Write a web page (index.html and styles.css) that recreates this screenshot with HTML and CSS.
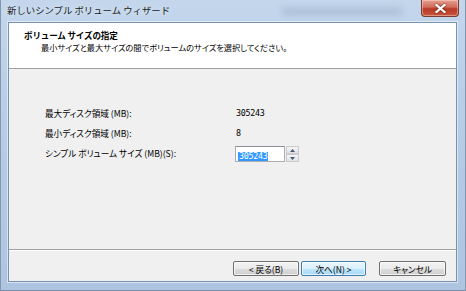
FILE: index.html
```html
<!DOCTYPE html>
<html lang="ja">
<head>
    <meta charset="UTF-8">
    <title>新しいシンプル ボリューム ウィザード</title>
    <link rel="stylesheet" href="styles.css">
</head>
<body>
    <div class="window">
        <div class="title-bar">
            <span class="title-text">新しいシンプル ボリューム ウィザード</span>
            <span class="behind-smudge"></span>
            <button class="close-button" aria-label="閉じる">
                <svg width="11" height="9" viewBox="0 0 11 9">
                    <path d="M1.5 1 L9.5 8 M9.5 1 L1.5 8" stroke="#fff" stroke-width="2.2" stroke-linecap="square"/>
                </svg>
            </button>
        </div>

        <div class="client">
            <div class="header">
                <div class="header-title">ボリューム サイズの指定</div>
                <div class="header-sub">最小サイズと最大サイズの間でボリュームのサイズを選択してください。</div>
            </div>

            <div class="content">
                <div class="size-grid">
                    <span class="label">最大ディスク領域 (MB):</span>
                    <span class="value">305243</span>

                    <span class="label">最小ディスク領域 (MB):</span>
                    <span class="value">8</span>

                    <span class="label">シンプル ボリューム サイズ (MB)(S):</span>
                    <div class="spin-box">
                        <div class="spin-input"><span class="selected">305243</span></div>
                        <div class="spin-buttons">
                            <div class="spin-btn">
                                <svg width="5" height="3" viewBox="0 0 5 3"><path d="M0 3 L2.5 0 L5 3 Z" fill="#3d5a80"/></svg>
                            </div>
                            <div class="spin-btn">
                                <svg width="5" height="3" viewBox="0 0 5 3"><path d="M0 0 L2.5 3 L5 0 Z" fill="#3d5a80"/></svg>
                            </div>
                        </div>
                    </div>
                </div>
            </div>

            <div class="footer">
                <button class="wiz-button back">&lt; 戻る(B)</button>
                <button class="wiz-button next">次へ(N) &gt;</button>
                <button class="wiz-button cancel">キャンセル</button>
            </div>
        </div>
    </div>
</body>
</html>
```

FILE: styles.css
```css
* {
    margin: 0;
    padding: 0;
    box-sizing: border-box;
}

body {
    width: 466px;
    height: 291px;
    overflow: hidden;
    font-family: "Noto Sans CJK JP", "Noto Sans", sans-serif;
    font-feature-settings: "palt";
    color: #000;
    background: #9fb9d6;
}

.window {
    width: 466px;
    height: 291px;
    display: flex;
    flex-direction: column;
    padding: 0 8px 8px 7px;
    background: linear-gradient(to bottom, #c3d6ec 0%, #b8cde6 40%, #adc5e1 100%);
    border-left: 1px solid #8397ae;
    border-right: 1px solid #8397ae;
    border-bottom: 1px solid #7a8ea6;
}

.title-bar {
    height: 22px;
    display: flex;
    align-items: flex-start;
    flex-shrink: 0;
}

.title-text {
    font-size: 9.4px;
    font-feature-settings: normal;
    line-height: 12px;
    margin-top: 4px;
    margin-left: -1px;
    color: #1b1b1b;
    text-shadow: 0 0 6px rgba(255, 255, 255, 0.9);
}

.behind-smudge {
    width: 120px;
    height: 7px;
    margin: 8px 0 0 112px;
    background: rgba(120, 140, 170, 0.3);
    filter: blur(3px);
}

.close-button {
    margin-left: auto;
    margin-right: -2px;
    width: 38px;
    height: 17px;
    border: 1px solid #7a3a34;
    border-top: none;
    border-radius: 0 0 4px 4px;
    background: linear-gradient(to bottom, #e8a293 0%, #d06a58 45%, #b73a26 55%, #c8563e 100%);
    box-shadow: inset 0 0 0 1px rgba(255, 220, 210, 0.45);
    display: flex;
    align-items: center;
    justify-content: center;
}

.close-button svg {
    filter: drop-shadow(0 0 1px #5a1a12);
}

.client {
    flex: 1;
    display: flex;
    flex-direction: column;
    background: #f0f0f0;
    border: 1px solid #7891ad;
    box-shadow: 0 0 0 1px rgba(255, 255, 255, 0.5);
}

.header {
    height: 46px;
    background: #fff;
    border-bottom: 1px solid #a0a0a0;
    padding: 6px 0 0 15px;
    flex-shrink: 0;
}

.header-title {
    font-size: 8.6px;
    font-weight: 700;
    font-feature-settings: normal;
    letter-spacing: -0.2px;
    line-height: 12px;
}

.header-sub {
    font-size: 8.2px;
    line-height: 12px;
    padding-left: 17px;
}

.content {
    flex: 1;
    padding: 34px 0 0 36px;
}

.size-grid {
    display: grid;
    grid-template-columns: 192px auto;
    grid-auto-rows: 20px;
    align-items: center;
    font-size: 8.6px;
    line-height: 12px;
}

.value {
    font-family: "DejaVu Sans Mono", monospace;
    font-size: 8.4px;
    letter-spacing: -0.3px;
    margin-left: -1px;
}

.spin-box {
    display: flex;
    height: 16px;
    margin-left: -2px;
    margin-top: 2px;
}

.spin-input {
    width: 50px;
    height: 16px;
    background: #fff;
    border: 1px solid #abadb3;
    border-top-color: #8c8f96;
    padding: 2px 0 0 2px;
}

.selected {
    display: inline-block;
    height: 9px;
    line-height: 9px;
    padding: 0 1px;
    background: #3399ff;
    color: #fff;
    font-family: "DejaVu Sans Mono", monospace;
    font-size: 8.4px;
    letter-spacing: -0.3px;
}

.spin-buttons {
    display: flex;
    flex-direction: column;
    width: 13px;
    margin-left: 1px;
}

.spin-btn {
    flex: 1;
    display: flex;
    align-items: center;
    justify-content: center;
    background: linear-gradient(to bottom, #f6f6f6, #e0e0e0);
    border: 1px solid #c9cbd0;
}

.footer {
    height: 32px;
    border-top: 1px solid #a0a0a0;
    box-shadow: inset 0 1px 0 #fff;
    display: flex;
    align-items: flex-start;
    padding: 11px 10px 0 0;
    justify-content: flex-end;
    flex-shrink: 0;
}

.wiz-button {
    height: 15px;
    width: 66px;
    font-family: "Noto Sans CJK JP", sans-serif;
    font-feature-settings: "palt";
    font-size: 8.6px;
    line-height: 12px;
    color: #000;
    border: 1px solid #707070;
    border-radius: 2px;
    background: linear-gradient(to bottom, #f2f2f2 0%, #ebebeb 50%, #dddddd 51%, #cfcfcf 100%);
    box-shadow: inset 0 0 0 1px rgba(255, 255, 255, 0.7);
}

.wiz-button.next {
    margin-left: 2px;
    width: 65px;
    border-color: #3c7fb1;
    background: linear-gradient(to bottom, #eaf6fd 0%, #d9f0fc 50%, #bee6fd 51%, #a7d9f5 100%);
}

.wiz-button.cancel {
    margin-left: 13px;
    width: 67px;
}
```
